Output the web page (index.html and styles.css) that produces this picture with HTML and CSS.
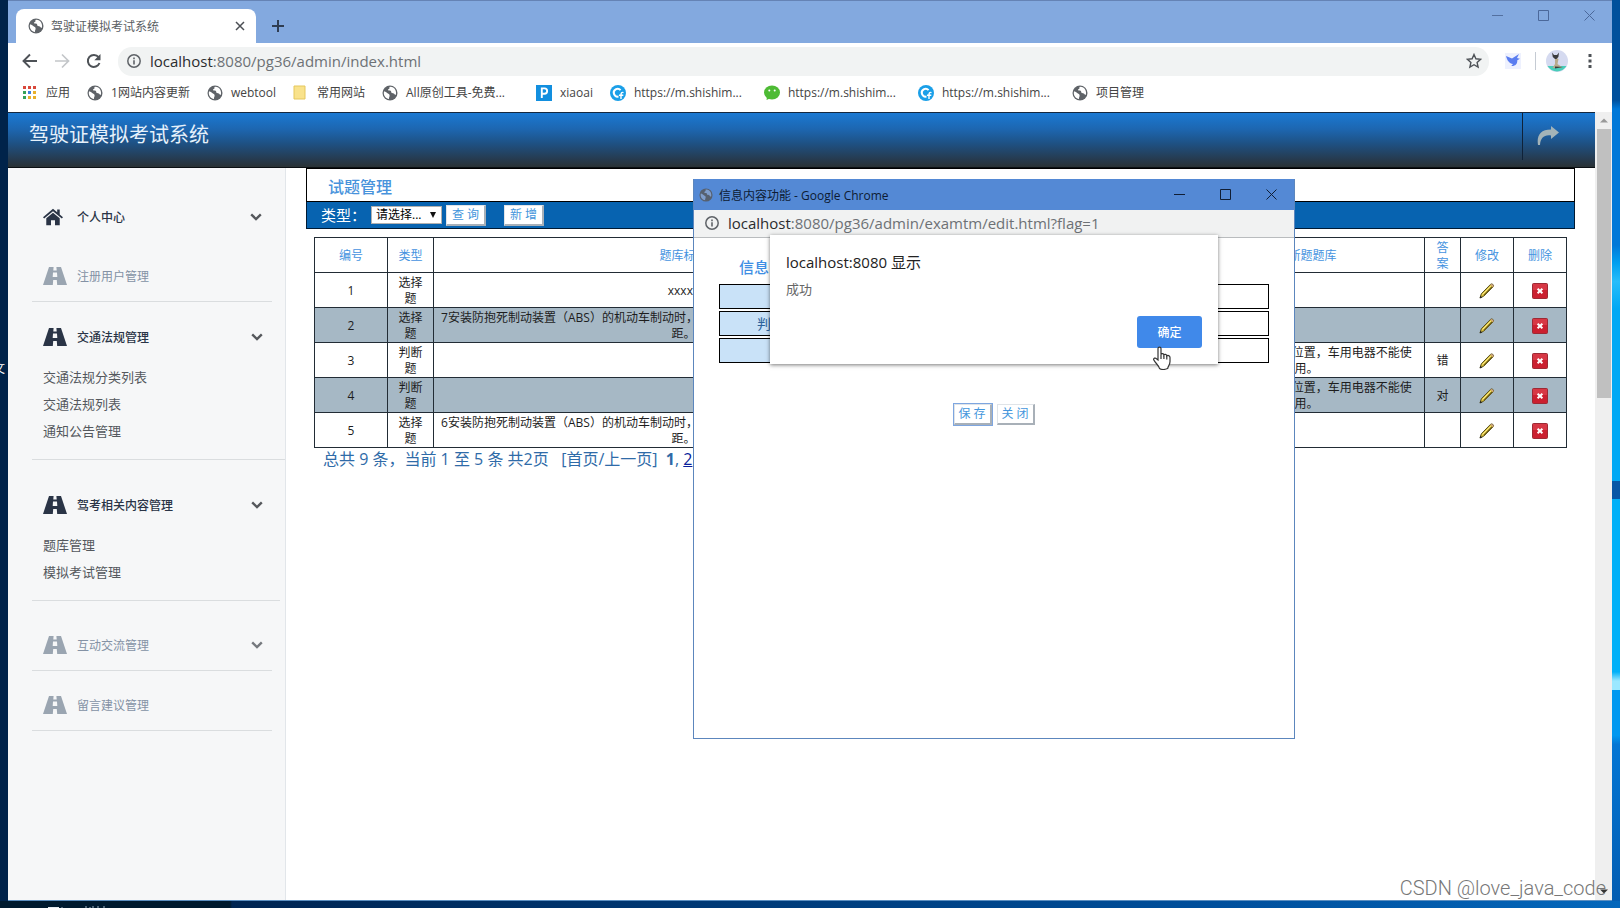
FILE: index.html
```html
<!DOCTYPE html>
<html lang="zh-CN">
<head>
<meta charset="utf-8">
<title>驾驶证模拟考试系统</title>
<link rel="stylesheet" href="styles.css">
</head>
<body>
<svg class="defs" aria-hidden="true">
  <symbol id="globe" viewBox="0 0 16 16"><circle cx="8" cy="8" r="7.5" fill="#5f6368"/><path d="M2.2 6.2C3.6 6.8 4.6 7.2 5.6 8.3C6.6 9.2 7.4 9 7.6 10.2C7.8 11.6 6.8 12 7 14C4 13.6 1.8 11 1.8 8C1.8 7.4 1.9 6.8 2.2 6.2ZM7.2 2C8 3 7.6 3.8 6.4 4.2C5.4 4.6 6.2 5.8 7.6 5.6C9 5.4 9.4 6.6 9.2 7.4C10.4 8.4 11.8 7.6 12.4 9C12.8 10 13.4 9.6 14 9.4C14.6 6 12.6 2 8.6 1.8Z" fill="#fff"/></symbol>
  <symbol id="globe-dim" viewBox="0 0 16 16"><circle cx="8" cy="8" r="7.5" fill="#56606f"/><path d="M2.2 6.2C3.6 6.8 4.6 7.2 5.6 8.3C6.6 9.2 7.4 9 7.6 10.2C7.8 11.6 6.8 12 7 14C4 13.6 1.8 11 1.8 8C1.8 7.4 1.9 6.8 2.2 6.2ZM7.2 2C8 3 7.6 3.8 6.4 4.2C5.4 4.6 6.2 5.8 7.6 5.6C9 5.4 9.4 6.6 9.2 7.4C10.4 8.4 11.8 7.6 12.4 9C12.8 10 13.4 9.6 14 9.4C14.6 6 12.6 2 8.6 1.8Z" fill="#7f9dcb"/></symbol>
  <symbol id="info" viewBox="0 0 16 16"><circle cx="8" cy="8" r="6.2" fill="none" stroke="#5f6368" stroke-width="1.5"/><path d="M7.2 7.2h1.6v4.2H7.2zM7.2 4.6h1.6v1.6H7.2z" fill="#5f6368"/></symbol>
  <symbol id="road" viewBox="0 0 24 18"><path d="M6 0h4.6l-.3 3.4h3.4L13.4 0H18l6 18H14.2l-.4-5h-3.6l-.4 5H0zM10 5.4L9.7 10h4.6L14 5.4z" fill="currentColor" fill-rule="evenodd"/></symbol>
  <symbol id="home" viewBox="0 0 22 18"><path d="M11 0l4.6 3.8V.8h2.8v5.4L22 9.2l-1.3 1.5L11 2.8 1.3 10.7 0 9.2z" fill="currentColor"/><path d="M11 4.4l7.4 6V18h-5.2v-5.4H8.8V18H3.6v-7.6z" fill="currentColor"/></symbol>
  <symbol id="chevron" viewBox="0 0 12 8"><path d="M1.2 1.4L6 6l4.8-4.6" fill="none" stroke="currentColor" stroke-width="2.4"/></symbol>
  <symbol id="shishi" viewBox="0 0 16 16"><circle cx="8" cy="8" r="8" fill="#1a9fe8"/><path d="M10.600 5.200A3.900 3.900 0 1 0 8.500 11.600" fill="none" stroke="#fff" stroke-width="2"/><path d="M13.500 7.600c-1.800-.6-2.400.4-2.500 2V14M9 10.200h4.300" fill="none" stroke="#fff" stroke-width="1.400"/></symbol>
  <symbol id="pencil" viewBox="0 0 16 16"><path d="M1 15l1.300-4.200L11.700 1.200c1.300-1 3.500.7 2.600 2.300L4.700 13.200z" fill="#d8bd3c" stroke="#57501f" stroke-width="1"/><path d="M3.500 11.500L11.800 3" stroke="#fff08a" stroke-width="1"/><path d="M5 12.300L13 4" stroke="#6b5c18" stroke-width="1.200"/><path d="M11.400 1.500l2.900 2.700c.8-1.700-1.200-3.900-2.900-2.700z" fill="#d5a392"/><path d="M.7 15.300l.8-2.500 1.700 1.700z" fill="#222"/></symbol>
  <symbol id="delete" viewBox="0 0 16 16"><rect x=".5" y=".5" width="15" height="15" rx="1" fill="#cb2030" stroke="#9d2a35"/><path d="M1 1h14v6H1z" fill="#df4a54" opacity=".6"/><path d="M5.600 5.800l4.800 4.400M10.400 5.800l-4.800 4.400" stroke="#fff" stroke-width="2"/></symbol>
</svg>
<div class="desktop">
  <span class="desk-label">文</span>
  <div class="window">
    <header class="tabstrip">
      <div class="tab"><svg class="i16"><use href="#globe"/></svg><span class="tab-title">驾驶证模拟考试系统</span>
        <button class="plain" aria-label="关闭标签页"><svg width="10" height="10" viewBox="0 0 10 10"><path d="M1 1l8 8M9 1l-8 8" stroke="#4b4f54" stroke-width="1.500"/></svg></button></div>
      <button class="plain new-tab" aria-label="新标签页"><svg width="12" height="12" viewBox="0 0 12 12"><path d="M6 0v12M0 6h12" stroke="#2f3d52" stroke-width="2"/></svg></button>
      <div class="caption">
        <button class="plain" aria-label="最小化"><svg width="11" height="11" viewBox="0 0 11 11"><path d="M0 5.500h11" stroke="#5370a0"/></svg></button>
        <button class="plain" aria-label="最大化"><svg width="11" height="11" viewBox="0 0 11 11"><path d="M.5.500h10v10H.5z" fill="none" stroke="#4b689a"/></svg></button>
        <button class="plain" aria-label="关闭"><svg width="11" height="11" viewBox="0 0 11 11"><path d="M.5.500l10 10M10.500.500l-10 10" stroke="#4b689a"/></svg></button>
      </div>
    </header>
    <div class="toolbar">
      <button class="plain" aria-label="后退"><svg width="16" height="16" viewBox="0 0 16 16"><path d="M15 8H2M8 1.500L1.500 8 8 14.500" fill="none" stroke="#4e5257" stroke-width="1.900"/></svg></button>
      <button class="plain" aria-label="前进"><svg width="16" height="16" viewBox="0 0 16 16"><path d="M1 8h13M8 1.500L14.500 8 8 14.500" fill="none" stroke="#c3c6c9" stroke-width="1.700"/></svg></button>
      <button class="plain" aria-label="重新加载"><svg width="16" height="16" viewBox="0 0 16 16"><path d="M13.500 10A6 6 0 1 1 12.600 4.200" fill="none" stroke="#4e5257" stroke-width="2"/><path d="M14.500 1v6.200H8.300z" fill="#4e5257"/></svg></button>
      <div class="omnibox"><svg class="i16"><use href="#info"/></svg><span class="url"><b>localhost</b>:8080/pg36/admin/index.html</span>
        <button class="plain" aria-label="收藏"><svg width="16" height="16" viewBox="0 0 16 16"><path d="M8 1.500l1.900 4.300 4.700.5-3.500 3.100 1 4.700L8 11.700l-4.100 2.400 1-4.700L1.400 6.300l4.700-.5z" fill="none" stroke="#4e5257" stroke-width="1.400"/></svg></button></div>
      <svg class="bird" width="16" height="16" viewBox="0 0 16 16"><path d="M0 0h16v16H0z" fill="#eef1fe"/><path d="M1 3l6 2.500L14 1l-2 4 3 .7-2.700 1.600c.2 4-2.300 6-6 5.700L8 11C4.500 10.500 2 7.500 1 3z" fill="#5a7df0"/></svg>
      <span class="bar"></span>
      <svg class="avatar" width="22" height="22" viewBox="0 0 22 22"><circle cx="11" cy="11" r="11" fill="#d5daf0"/><path d="M1.500 16h19A11 11 0 0 1 1.500 16z" fill="#49cdb9"/><path d="M9 7l3.500 2-1 5 5 3.500-10 .5 2.500-4z" fill="#b9ab8c"/><path d="M6 2.500l2 2.500h3l2-2.500-.6 4.500-2 2H9L6.800 7zM9 16.500l8 .5-8 1.500z" fill="#3a3b3d"/></svg>
      <button class="plain" aria-label="菜单"><svg width="4" height="16" viewBox="0 0 4 16"><path d="M.5 1h3v3h-3zM.5 6.500h3v3h-3zM.5 12h3v3h-3z" fill="#4e5257"/></svg></button>
    </div>
    <nav class="bookmarks">
      <a href="#"><svg class="i16" viewBox="0 0 16 16"><path d="M1 1h3v3H1zM6 1h3v3H6zM11 1h3v3h-3z" fill="#d9483b"/><path d="M1 6h3v3H1z" fill="#36a15a"/><path d="M6 6h3v3H6z" fill="#3d7fe0"/><path d="M11 6h3v3h-3zM6 11h3v3H6zM11 11h3v3h-3z" fill="#e8b02c"/><path d="M1 11h3v3H1z" fill="#36a15a"/></svg>应用</a>
      <a href="#"><svg class="i16"><use href="#globe"/></svg>1网站内容更新</a>
      <a href="#"><svg class="i16"><use href="#globe"/></svg>webtool</a>
      <a href="#"><svg class="i16" viewBox="0 0 16 16"><path d="M1 1h11v13H1z" fill="#f9e28b" stroke="#e5c75c"/></svg>常用网站</a>
      <a href="#" class="long"><svg class="i16"><use href="#globe"/></svg>All原创工具-免费...</a>
      <a href="#"><svg class="i16" viewBox="0 0 16 16"><path d="M0 0h16v16H0z" fill="#128fdf"/><path d="M5.800 13V3.400h2.700a2.500 2.500 0 0 1 0 5.300H6" fill="none" stroke="#fff" stroke-width="1.900"/></svg>xiaoai</a>
      <a href="#" class="long"><svg class="i16"><use href="#shishi"/></svg>https://m.shishim...</a>
      <a href="#" class="long"><svg class="i16" viewBox="0 0 16 16"><ellipse cx="8" cy="7.500" rx="8" ry="7" fill="#4dbb34"/><path d="M3 12l-.5 3 3.500-1.500z" fill="#4dbb34"/><circle cx="5.300" cy="5.500" r="1" fill="#fff"/><circle cx="10.700" cy="5.500" r="1" fill="#fff"/></svg>https://m.shishim...</a>
      <a href="#" class="long"><svg class="i16"><use href="#shishi"/></svg>https://m.shishim...</a>
      <a href="#"><svg class="i16"><use href="#globe"/></svg>项目管理</a>
    </nav>
    <div class="viewport">
      <div class="page">
        <header class="app-header"><h1>驾驶证模拟考试系统</h1>
          <a href="#" class="share" aria-label="退出"><svg width="22" height="20" viewBox="0 0 22 20"><path d="M14 0l8 6.500-8 6.500V9.500C7 8.500 3.500 12 3 19H1C-.5 10 3 3.500 14 3.500z" fill="#a3b3b8"/></svg></a></header>
        <div class="columns">
          <nav class="sidebar">
            <section class="g first"><button class="menu"><svg width="20" height="18"><use href="#home"/></svg><span>个人中心</span><svg class="chev"><use href="#chevron"/></svg></button></section>
            <section class="g lined reg"><button class="menu dim"><svg width="24" height="18"><use href="#road"/></svg><span>注册用户管理</span></button></section>
            <section class="g lined open wide"><button class="menu"><svg width="24" height="18"><use href="#road"/></svg><span>交通法规管理</span><svg class="chev"><use href="#chevron"/></svg></button>
              <a href="#">交通法规分类列表</a><a href="#">交通法规列表</a><a href="#">通知公告管理</a></section>
            <section class="g lined open second"><button class="menu"><svg width="24" height="18"><use href="#road"/></svg><span>驾考相关内容管理</span><svg class="chev"><use href="#chevron"/></svg></button>
              <a href="#">题库管理</a><a href="#">模拟考试管理</a></section>
            <section class="g lined talk"><button class="menu dim"><svg width="24" height="18"><use href="#road"/></svg><span>互动交流管理</span><svg class="chev"><use href="#chevron"/></svg></button></section>
            <section class="g lined note"><button class="menu dim"><svg width="24" height="18"><use href="#road"/></svg><span>留言建议管理</span></button></section>
          </nav>
          <main class="content">
            <h2>试题管理</h2>
            <form class="filter"><label for="kind">类型：</label><span class="select"><select id="kind"><option>请选择...</option></select></span><button type="button">查 询</button><button type="button" class="add">新 增</button></form>
            <div class="list">
            <table>
              <colgroup><col class="c-no"><col class="c-kind"><col class="c-title"><col><col class="c-judge"><col class="c-ans"><col class="c-op"><col class="c-op"></colgroup>
              <thead><tr><th>编号</th><th>类型</th><th>题库标题</th><th></th><th>判断题题库</th><th>答<br>案</th><th>修改</th><th>删除</th></tr></thead>
              <tbody>
              <tr><td>1</td><td>选择<br>题</td><td>xxxxx</td><td></td><td></td><td></td><td><a href="#" aria-label="修改"><svg class="i16"><use href="#pencil"/></svg></a></td><td><a href="#" aria-label="删除"><svg class="i16"><use href="#delete"/></svg></a></td></tr>
              <tr><td>2</td><td>选择<br>题</td><td>7安装防抱死制动装置（ABS）的机动车制动时，制动距离会大大缩短，因此不必保持安全车<br>距。</td><td></td><td></td><td></td><td><a href="#" aria-label="修改"><svg class="i16"><use href="#pencil"/></svg></a></td><td><a href="#" aria-label="删除"><svg class="i16"><use href="#delete"/></svg></a></td></tr>
              <tr><td>3</td><td>判断<br>题</td><td></td><td></td><td>当点火开关在ON位置，车用电器不能使<br>用。</td><td>错</td><td><a href="#" aria-label="修改"><svg class="i16"><use href="#pencil"/></svg></a></td><td><a href="#" aria-label="删除"><svg class="i16"><use href="#delete"/></svg></a></td></tr>
              <tr><td>4</td><td>判断<br>题</td><td></td><td></td><td>当点火开关在ON位置，车用电器不能使<br>用。</td><td>对</td><td><a href="#" aria-label="修改"><svg class="i16"><use href="#pencil"/></svg></a></td><td><a href="#" aria-label="删除"><svg class="i16"><use href="#delete"/></svg></a></td></tr>
              <tr><td>5</td><td>选择<br>题</td><td>6安装防抱死制动装置（ABS）的机动车制动时，制动距离会大大缩短，因此不必保持安全车<br>距。</td><td></td><td></td><td></td><td><a href="#" aria-label="修改"><svg class="i16"><use href="#pencil"/></svg></a></td><td><a href="#" aria-label="删除"><svg class="i16"><use href="#delete"/></svg></a></td></tr>
              </tbody>
            </table>
            <p class="pager">总共 9 条，当前 1 至 5 条 共2页&nbsp;&nbsp; [首页/上一页]&nbsp; <b>1</b>, <a href="#">2</a></p>
            </div>
          </main>
        </div>
      </div>
      <div class="scrollbar"><svg width="8" height="5" viewBox="0 0 8 5"><path d="M0 4.500L4 .500l4 4z" fill="#999"/></svg><span class="thumb"></span><svg class="down" width="8" height="5" viewBox="0 0 8 5"><path d="M0 .500h8L4 4.500z" fill="#333"/></svg></div>
    </div>
  </div>
  <div class="taskbar"><svg width="120" height="7" viewBox="0 0 120 7"><path d="M48 6h11v1H48z" fill="#e6edf2"/><path d="M62 6v1M86 5v2M90 6v1M93 5v2M98 5v2M104 5v2" stroke="#9fb2c4"/></svg></div>

  <div class="popup">
    <header class="popup-title"><svg width="14" height="14"><use href="#globe-dim"/></svg><span>信息内容功能 - Google Chrome</span>
      <button class="plain" aria-label="最小化"><svg width="11" height="11" viewBox="0 0 11 11"><path d="M0 5.500h11" stroke="#101e35"/></svg></button>
      <button class="plain" aria-label="最大化"><svg width="11" height="11" viewBox="0 0 11 11"><path d="M.5.500h10v10H.5z" fill="none" stroke="#101e35"/></svg></button>
      <button class="plain" aria-label="关闭"><svg width="11" height="11" viewBox="0 0 11 11"><path d="M.5.500l10 10M10.500.500l-10 10" stroke="#101e35"/></svg></button></header>
    <div class="popup-url"><svg class="i16"><use href="#info"/></svg><span class="url"><b>localhost</b>:8080/pg36/admin/examtm/edit.html?flag=1</span></div>
    <form class="edit">
      <h3>信息</h3>
      <div class="field"><span></span><span></span></div>
      <div class="field"><span>判断题库</span><span></span></div>
      <div class="field"><span></span><span></span></div>
      <div class="actions"><button type="button" class="save">保 存</button><button type="button">关 闭</button></div>
    </form>
    <div class="dialog" role="alertdialog" aria-labelledby="dlg">
      <h4 id="dlg">localhost:8080 显示</h4>
      <p>成功</p>
      <button type="button">确定</button>
      <svg class="hand" width="20" height="24" viewBox="0 0 20 24"><path d="M6 14V2.600C6 .6 9 .6 9 2.600V8.500C9.300 7.200 11.700 7.400 11.900 9C12.500 7.900 14.600 8.300 14.800 9.900C15.600 9 18 9.500 18 11.500V15.500C18 19 16 20 15.700 22.500C12.500 23.800 9.500 23.700 7.500 22.500C7 19.500 3.500 17.500 1.700 13.800C1.300 12 3.300 11.500 4.500 12.700Z" fill="#fff" stroke="#333" stroke-width="1.200"/><path d="M9 8.500V13M11.900 9.500V13M14.800 10V13.500" stroke="#333" stroke-width="1.200"/></svg>
    </div>
  </div>
  <div class="watermark">CSDN @love_java_code</div>
</div>
</body>
</html>
```
FILE: styles.css
```css
* { box-sizing: border-box; }
body { margin: 0; font-family: "Open Sans", "Noto Sans CJK SC", sans-serif; font-size: 12px; color: #222; }
h1, h2, h3, h4, p { margin: 0; font-weight: 400; }
a { color: inherit; text-decoration: none; }
button, select { font: inherit; }
svg { display: block; flex: none; }
.defs { position: absolute; width: 0; height: 0; }
.i16 { width: 16px; height: 16px; }
.plain { display: flex; align-items: center; padding: 0; border: 0; background: none; }

.desktop { position: relative; min-height: 100vh; overflow: hidden; display: flex; flex-direction: column; padding: 0 8px;
  background: linear-gradient(90deg, #00234a 50%, transparent 50%), linear-gradient(#00509c 0 11%, #0078d8 12% 27%, #00a0f0 29%, #27bdfa 31%, #00a8f4 34% 53%, #0756a6 53% 55%, #00b0f8 55% 74%, #9be8ff 75% 76%, #0098f0 76% 81%, #0476d4 82%, #045cb0 100%); }
.desk-label { position: absolute; left: -7px; top: 359px; color: #fff; }
.window { position: relative; flex: 1; display: flex; flex-direction: column; background: #fff; border-top: 1px solid #6583b5; border-bottom: 1px solid #5d8fc0; }
.taskbar { height: 7px; margin: 0 -8px; background: linear-gradient(90deg, #001a2e 0 230px, #002451 232px, #004f9c 75%, #0467bb); }

.tabstrip { display: flex; height: 42px; padding: 8px 17px 0 8px; background: #83a9df; }
.tab { display: flex; align-items: center; width: 240px; gap: 7px; padding: 0 11px 0 12px; border-radius: 8px 8px 0 0; background: #fff; }
.tab-title { flex: 1; color: #5a5e63; }
.new-tab { margin-left: 16px; }
.caption { display: flex; gap: 35px; margin-left: auto; height: 12px; }
.toolbar { display: flex; align-items: center; height: 36px; padding: 0 20px 0 14px; gap: 16px; }
.omnibox { flex: 1; display: flex; align-items: center; height: 29px; padding: 0 7px 0 8px; gap: 8px; border-radius: 14px; background: #f1f3f3; }
.url { flex: 1; font-size: 15px; line-height: 20px; color: #6d7175; }
.url b { font-weight: 400; color: #2a2c2e; }
.bird { margin-right: -2px; }
.bar { width: 1px; height: 18px; margin-right: -6px; background: #c5cbd3; }
.avatar { margin-right: 4px; }
.bookmarks { display: flex; align-items: center; height: 33px; padding: 0 14px 5px; gap: 17px; color: #444; }
.bookmarks a { display: flex; align-items: center; gap: 8px; line-height: 16px; white-space: nowrap; }
.bookmarks .long { width: 137px; }

.viewport { flex: 1; display: flex; }
.page { flex: 1; display: flex; flex-direction: column; }
.app-header { display: flex; height: 56px; padding-left: 21px; border-top: 1px solid #14283f; border-bottom: 1px solid #0b1014; background: linear-gradient(#1a79d3, #1d66b0 30%, #1e5286 55%, #263b50 85%, #2a3235); }
.app-header h1 { flex: 1; font-size: 20px; line-height: 44px; color: #e6f1fb; }
.share { width: 73px; height: 47px; padding: 13px 0 0 14px; border-left: 1px solid #0f2238; }
.scrollbar { display: flex; flex-direction: column; align-items: center; width: 17px; padding: 6px 1px 6px; background: #efefef; }
.thumb { width: 14px; height: 269px; margin-top: 6px; background: #c0c0c0; }
.down { margin-top: auto; }

.columns { flex: 1; display: flex; }
.sidebar { width: 278px; padding-top: 34px; border-right: 1px solid #e2e6ea; background: #f6f7f8; }
.g { margin: 0 13px 0 24px; }
.lined { border-bottom: 1px solid #dadddf; }
.menu { display: flex; align-items: center; width: 100%; height: 30px; padding: 0 10px 0 11px; border: 0; background: none; color: #2a3446; font-weight: 500; text-align: left; }
.menu svg:first-child { margin-right: 10px; }
.menu svg[width="20"] { margin-right: 14px; }
.menu span { flex: 1; }
.chev { width: 12px; height: 8px; color: #55585c; }
.dim { color: #8492a5; font-weight: 400; }
.dim svg:first-child { color: #9aa5b1; }
.dim .chev { color: #75797e; }
.reg { padding: 29px 0 10px; }
.open { padding: 20px 0 14px; }
.open .menu { margin-bottom: 12px; }
.open a { display: block; padding-left: 11px; font-size: 13px; line-height: 27px; color: #54585d; }
.wide { margin-right: 0; }
.second { margin-right: 5px; padding-top: 30px; }
.second .menu, .talk .menu, .wide .menu { width: 241px; }
.talk { padding: 29px 0 10px; }
.note { padding: 19px 0 10px; }

.content { flex: 1; min-width: 0; padding: 0 20px; }
.content h2 { height: 34px; padding-left: 21px; border: 1px solid #000; font-size: 16px; line-height: 36px; font-weight: 500; color: #4893dc; }
.filter { display: flex; align-items: center; height: 27px; padding-left: 14px; border: solid #001a33; border-width: 0 1px 1px; background: #0763b0; }
.filter label { width: 50px; font-size: 15px; line-height: 20px; color: #fff; }
.select { position: relative; display: block; width: 71px; height: 18px; margin-right: 4px; }
.select::after { content: ""; position: absolute; right: 6px; top: 6px; border: solid transparent; border-width: 6px 3px 0; border-top-color: #111; }
select { appearance: none; width: 100%; height: 100%; padding: 0 0 0 4px; border: 1px solid #b0b0b0; border-radius: 0; background: #fff; color: #000; line-height: 16px; }
.filter button, .actions button { display: block; height: 21px; width: 40px; padding: 0; border: 1px solid #e0e4e8; border-right: 2px solid #a8b0b8; border-bottom: 2px solid #a8b0b8; background: #fff; color: #4496dc; font-size: 12px; line-height: 18px; }
.filter .add { margin-left: 18px; }
.list { padding: 8px 8px 0; }
table { width: 100%; table-layout: fixed; border-collapse: collapse; line-height: 16px; color: #1d1d1d; }
th, td { height: 35px; padding: 2px 4px 0; border: 1px solid #222c35; text-align: center; vertical-align: middle; white-space: nowrap; }
th { color: #4493e0; font-weight: 400; }
tbody tr:nth-child(even) { background: #a6b8c5; }
td svg { margin: 0 auto; }
.c-no { width: 73px; } .c-kind { width: 46px; } .c-title { width: 500px; } .c-judge { width: 236px; } .c-ans { width: 36px; } .c-op { width: 53px; }
.pager { padding-left: 9px; font-size: 16px; line-height: 22px; color: #2f6ba8; white-space: nowrap; }
.pager a { color: #0a1f9c; text-decoration: underline; }

.popup { position: absolute; left: 693px; top: 179px; width: 602px; height: 560px; border: 1px solid #5c86bd; border-top: 0; background: #fff; }
.popup-title { display: flex; align-items: center; height: 31px; padding: 0 17px 0 5px; gap: 6px; background: #5489d5; color: #0d1b33; }
.popup-title span { flex: 1; }
.popup-title button + button { margin-left: 29px; }
.popup-url { display: flex; align-items: center; height: 28px; padding: 0 10px 2px; gap: 8px; border-bottom: 1px solid #b9bcbe; background: #f1f2f2; }
.edit { padding: 18px 25px 0; }
.edit h3 { padding-left: 20px; margin-bottom: 6px; font-size: 15px; line-height: 22px; font-weight: 500; color: #3e8ee4; }
.field { display: grid; grid-template-columns: 130px 1fr; height: 25px; margin-bottom: 2px; border: 1px solid #000; font-size: 14px; line-height: 23px; color: #2c629b; text-align: center; }
.field span:first-child { background: #c9e2f8; }
.actions { display: flex; justify-content: center; gap: 5px; margin-top: 41px; }
.actions button { width: 38px; }
.actions .save { outline: 1px solid #7ea6e0; }
.dialog { position: absolute; left: 76px; top: 56px; width: 448px; height: 129px; padding: 15px 16px; background: #fff; box-shadow: 0 1px 4px #0008; }
.dialog h4 { font-size: 15px; line-height: 24px; }
.dialog p { font-size: 13px; line-height: 18px; margin-top: 6px; color: #666; }
.dialog button { display: block; width: 65px; height: 32px; margin: 18px 0 0 auto; border: 0; border-radius: 3px; background: #4089ea; color: #fff; font-weight: 500; }
.hand { position: absolute; left: 382px; top: 111px; }
.watermark { position: absolute; right: 14px; bottom: 8px; font: 300 20px/24px Roboto, "Liberation Sans", sans-serif; color: #777; }
```
